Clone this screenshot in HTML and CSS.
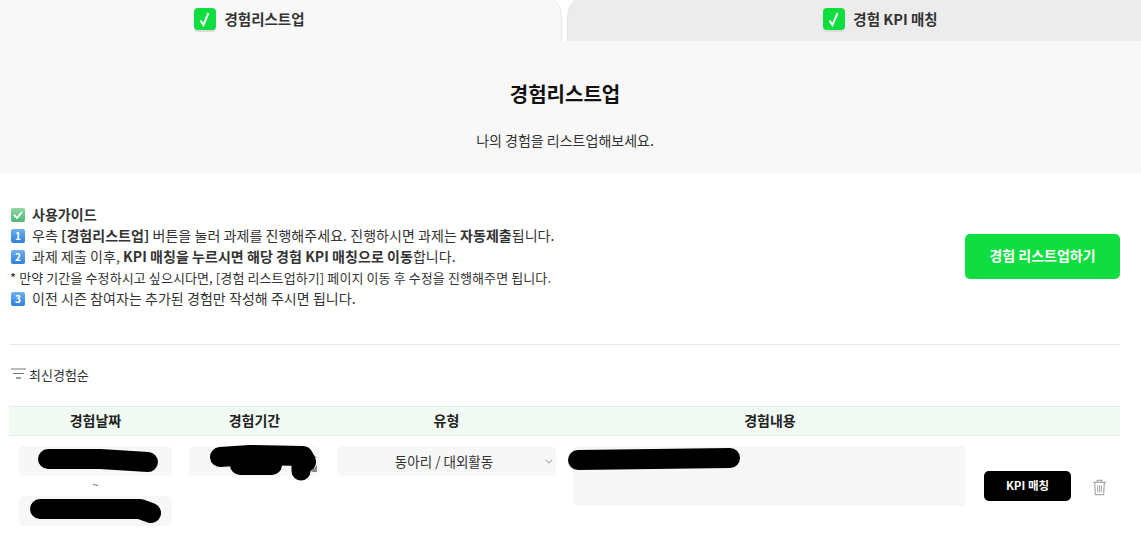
FILE: index.html
```html
<!DOCTYPE html>
<html>
<head>
	<title>경험리스트업</title>
	<meta charset="utf-8">
	<meta name="viewport" content="width=device-width, initial-scale=1">
	<link rel="stylesheet" href="styles.css">
</head>
<body>
	<div class="tabs">
		<div class="tab tabActive">
			<span class="tabCheck">
				<svg viewBox="0 0 22 22"><path d="M6.5 12.5 L9.5 17 L14.5 5" fill="none" stroke="white" stroke-width="2"/></svg>
			</span>
			경험리스트업
		</div>
		<div class="tab tabOther">
			<span class="tabCheck">
				<svg viewBox="0 0 22 22"><path d="M6.5 12.5 L9.5 17 L14.5 5" fill="none" stroke="white" stroke-width="2"/></svg>
			</span>
			경험 KPI 매칭
		</div>
	</div>

	<div class="pageHead">
		<h1>경험리스트업</h1>
		<p>나의 경험을 리스트업해보세요.</p>
	</div>

	<div class="content">
		<div class="guideRow">
			<div class="guide">
				<div><span class="emoji emojiGreen"><svg viewBox="0 0 14 14"><path d="M3 7 L6 10 L11 4" fill="none" stroke="white" stroke-width="1.8"/></svg></span><b>사용가이드</b></div>
				<div><span class="emoji">1</span>우측 <b>[경험리스트업]</b> 버튼을 눌러 과제를 진행해주세요. 진행하시면 과제는 <b>자동제출</b>됩니다.</div>
				<div><span class="emoji">2</span>과제 제출 이후, <b>KPI 매칭을 누르시면 해당 경험 KPI 매칭으로 이동</b>합니다.</div>
				<div class="guideNote">* 만약 기간을 수정하시고 싶으시다면, [경험 리스트업하기] 페이지 이동 후 수정을 진행해주면 됩니다.</div>
				<div><span class="emoji">3</span>이전 시즌 참여자는 추가된 경험만 작성해 주시면 됩니다.</div>
			</div>
			<a class="listupButton">경험 리스트업하기</a>
		</div>

		<div class="sort">
			<svg viewBox="0 0 16 12" width="16" height="12">
				<line x1="0" y1="1" x2="15" y2="1" stroke="#777" stroke-width="1"/>
				<line x1="2" y1="5.5" x2="13" y2="5.5" stroke="#777" stroke-width="1"/>
				<line x1="5" y1="10" x2="10" y2="10" stroke="#777" stroke-width="1.4"/>
			</svg>
			최신경험순
		</div>

		<div class="tableGrid tableHead">
			<div>경험날짜</div>
			<div>경험기간</div>
			<div>유형</div>
			<div>경험내용</div>
			<div></div>
			<div></div>
		</div>

		<div class="tableGrid tableRow">
			<div class="dateCell">
				<div class="field"></div>
				<div class="tilde">~</div>
				<div class="field"></div>
			</div>
			<div class="field"></div>
			<div class="field selectField">
				동아리 / 대외활동
				<svg class="chevron" viewBox="0 0 10 6" width="8" height="5"><path d="M1 1 L5 5 L9 1" fill="none" stroke="#aaa" stroke-width="1.3"/></svg>
			</div>
			<div class="field textField"></div>
			<a class="kpiButton">KPI 매칭</a>
			<svg class="trash" viewBox="0 0 16 18" width="15" height="17">
				<path d="M1 3.5 H15 M5.5 3.5 V1.5 H10.5 V3.5 M2.8 3.5 L3.6 16.5 H12.4 L13.2 3.5" fill="none" stroke="#aaa" stroke-width="1.3"/>
				<path d="M6 6.5 V14 M8 6.5 V14 M10 6.5 V14" fill="none" stroke="#aaa" stroke-width="1.1"/>
			</svg>
		</div>
	</div>

	<!-- blacked out values on top of the fields -->
	<svg class="redactions" viewBox="0 0 1141 533">
		<polygon points="311,452 317,458 311,458" fill="#888"/>
		<polygon points="311,472 317,465 317,472" fill="#888"/>
		<g fill="none" stroke="black" stroke-linecap="round" stroke-linejoin="round">
			<path d="M48 459 L100 459 L148 462" stroke-width="20"/>
			<path d="M40 509 L140 509 L151 513" stroke-width="20"/>
			<path d="M220 457 L250 455 L303 456 L306 462" stroke-width="20"/>
			<path d="M240 465 L272 465" stroke-width="20"/>
			<path d="M301 462 L301 471" stroke-width="19"/>
			<path d="M578 460 L730 458" stroke-width="20"/>
		</g>
	</svg>
</body>
</html>
```

FILE: styles.css
```css
* {
	box-sizing: border-box;
}

body {
	margin: 0;
	width: 1141px;
	height: 533px;
	overflow: hidden;
	position: relative;
	background: #fff;
	color: #333;
	font-family: "Noto Sans CJK KR", "Noto Sans", sans-serif;
	font-size: 14px;
}

.tabs {
	display: grid;
	grid-template-columns: 562px 1fr;
	column-gap: 5px;
	height: 41px;
}

.tab {
	display: flex;
	align-items: center;
	justify-content: center;
	gap: 8px;
	padding-bottom: 4px;
	font-size: 14.5px;
	font-weight: 700;
}

.tabActive {
	padding-right: 62px;
	background: #f8f8f8;
	border-right: 1px solid #e3e3e3;
	border-top-right-radius: 10px 20px;
}

.tabOther {
	padding-left: 52px;
	background: #ececec;
	border-left: 1px solid #e3e3e3;
	border-top-left-radius: 10px 20px;
}

.tabCheck {
	display: flex;
	width: 22px;
	height: 22px;
	border-radius: 4px;
	background: #10dd40;
	box-shadow: 0 2px 0 #dcdcdc;
}

.pageHead {
	height: 133px;
	padding: 38px 11px 0 0;
	background: #f8f8f8;
	text-align: center;
}

.pageHead h1 {
	margin: 0;
	color: #111;
	font-size: 20px;
	font-weight: 700;
	line-height: 30px;
}

.pageHead p {
	margin: 21px 0 0;
	font-size: 14px;
	line-height: 20px;
}

.content {
	padding: 30px 21px 0 10px;
}

.guideRow {
	display: flex;
	align-items: center;
	justify-content: space-between;
	padding-bottom: 35px;
	border-bottom: 1px solid #e8e8e8;
}

.guide {
	letter-spacing: 0.05px;
	line-height: 21px;
}

.guide b {
	font-weight: 700;
}

.guideNote {
	font-size: 13px;
	letter-spacing: 0.1px;
}

.emoji {
	display: inline-flex;
	align-items: center;
	justify-content: center;
	width: 14px;
	height: 14px;
	margin: 4px 7px 0 1px;
	vertical-align: top;
	border-radius: 2px;
	background: linear-gradient(#6fb0f0, #2f7fe0);
	color: #fff;
	font-size: 10px;
	font-weight: 700;
	line-height: 14px;
}

.emojiGreen {
	background: linear-gradient(#8fd6a4, #4fb873);
}

.listupButton {
	width: 155px;
	height: 45px;
	border-radius: 5px;
	background: #10dd40;
	color: #fff;
	font-size: 14px;
	font-weight: 700;
	line-height: 43px;
	text-align: center;
}

.sort {
	display: flex;
	align-items: center;
	gap: 2px;
	height: 20px;
	margin: 19px 0 22px;
	padding-left: 1px;
	font-size: 13px;
}

.tableGrid {
	display: grid;
	grid-template-columns: 153px 131px 219px 394px 87px 16px;
	column-gap: 17px;
	padding: 0 9px;
}

.tableHead {
	height: 30px;
	margin-left: -1px;
	padding-left: 10px;
	background: #f1fbf3;
	border-top: 1px solid #e4ece6;
	border-bottom: 1px solid #e4ece6;
	color: #222;
	font-weight: 700;
	line-height: 27px;
	text-align: center;
}

.tableRow {
	padding-top: 10px;
	align-items: start;
}

.field {
	height: 30px;
	border-radius: 5px;
	background: #f7f7f7;
}

.dateCell .tilde {
	height: 20px;
	color: #666;
	font-size: 11px;
	line-height: 17px;
	text-align: center;
}

.selectField {
	position: relative;
	padding-right: 5px;
	font-size: 13.5px;
	line-height: 30px;
	text-align: center;
}

.chevron {
	position: absolute;
	top: 13px;
	right: 3px;
}

.textField {
	height: 60px;
	margin-right: 1px;
}

.kpiButton {
	align-self: center;
	height: 30px;
	border-radius: 5px;
	background: #000;
	color: #fff;
	font-size: 11.5px;
	font-weight: 700;
	line-height: 29px;
	text-align: center;
}

.trash {
	align-self: center;
	justify-self: center;
	margin: 2px 0 0 6px;
}

.redactions {
	position: absolute;
	top: 0;
	left: 0;
	width: 1141px;
	height: 533px;
	pointer-events: none;
}
```
